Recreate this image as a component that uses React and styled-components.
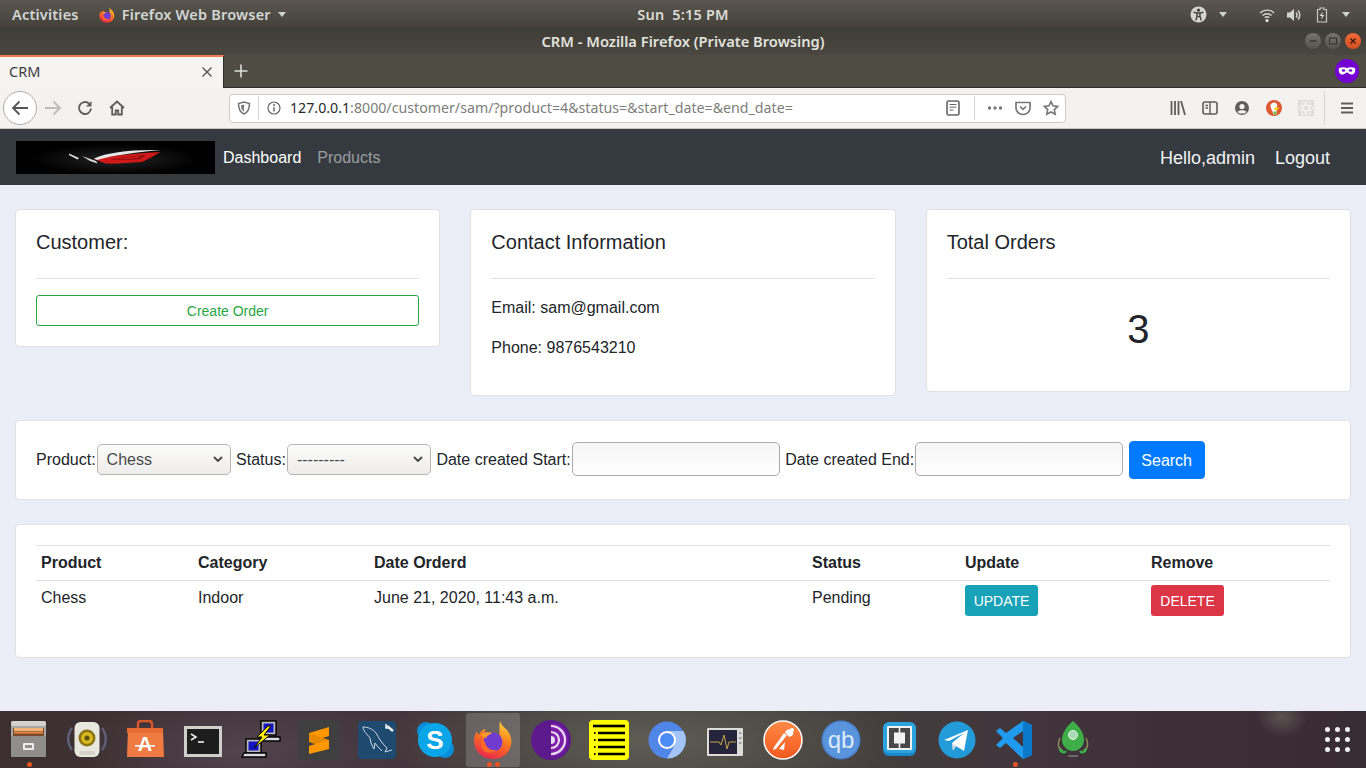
import styled, { createGlobalStyle } from "styled-components";

const GlobalStyle = createGlobalStyle`
  * { box-sizing: border-box; }
  html, body { margin: 0; padding: 0; height: 100%; overflow: hidden; }
  body { font-family: "Liberation Sans", Arial, sans-serif; font-size: 16px; line-height: 1.5; color: #212529; background: #ebeef6; }
`;

const Screen = styled.div`
  display: flex;
  flex-direction: column;
  height: 768px;
  width: 1366px;
  overflow: hidden;
`;

/* ---------- gnome top bar ---------- */
const TopBar = styled.div`
  height: 27px;
  display: grid;
  grid-template-columns: 1fr auto 1fr;
  align-items: center;
  padding-top: 2px;
  background: linear-gradient(#5b574f, #45423b);
  color: #dcdcd6;
  font-family: "Noto Sans", sans-serif;
  font-weight: 600;
  font-size: 14.5px;
  line-height: 25px;
  letter-spacing: 0.2px;
`;
const TopLeft = styled.div`
  display: flex;
  align-items: center;
  padding-left: 12px;
  color: #d3d7d4;
`;
const AppMenu = styled.div`
  display: flex;
  align-items: center;
  gap: 7px;
  margin-left: 20px;
`;
const Caret = styled.span`
  display: inline-block;
  width: 0;
  height: 0;
  border-left: 4.5px solid transparent;
  border-right: 4.5px solid transparent;
  border-top: 5px solid #d3d3ce;
`;
const TopRight = styled.div`
  display: flex;
  align-items: center;
  justify-content: flex-end;
  padding-right: 16px;
`;
const TrayGap = styled.span`
  display: inline-flex;
  margin-left: ${(p) => p.$left || 0}px;
`;

/* ---------- window title ---------- */
const TitleBar = styled.div`
  height: 28px;
  display: grid;
  grid-template-columns: 1fr auto 1fr;
  align-items: center;
  background: linear-gradient(#3e3c36, #4a4740);
  color: #e2e2dd;
  font-family: "Noto Sans", sans-serif;
  font-weight: 600;
  font-size: 14.7px;
`;
const WindowButtons = styled.div`
  grid-column: 3;
  display: flex;
  justify-content: flex-end;
  gap: 4px;
  padding-right: 5px;
`;
const WindowButton = styled.span`
  width: 16px;
  height: 16px;
  border-radius: 50%;
  display: flex;
  align-items: center;
  justify-content: center;
  background: ${(p) => (p.$close ? "linear-gradient(#f0693a,#d14f1f)" : "linear-gradient(#75736c,#55534c)")};
`;

const TabStrip = styled.div`
  height: 33px;
  display: flex;
  align-items: stretch;
  background: #4f4c44;
  border-bottom: 1px solid #2e2d29;
`;
const Tab = styled.div`
  width: 224px;
  height: 33px;
  display: flex;
  align-items: center;
  justify-content: space-between;
  padding: 0 10px 2px 9px;
  background: #f5f4f2;
  border-top: 2px solid #ee7d55;
  font-family: "Noto Sans", sans-serif;
  font-size: 14.5px;
  color: #3c3c3c;
  border-right: 1px solid #2e2d29;
`;
const NewTab = styled.div`
  width: 33px;
  display: flex;
  align-items: center;
  justify-content: center;
`;
const PrivateBadge = styled.div`
  margin-left: auto;
  margin-right: 7px;
  align-self: center;
  width: 24px;
  height: 24px;
  border-radius: 50%;
  background: #7400d3;
  display: flex;
  align-items: center;
  justify-content: center;
`;

const BrowserBar = styled.div`
  height: 41px;
  display: flex;
  align-items: center;
  padding-left: 3px;
  background: #f3f2f0;
  border-bottom: 1px solid #c8c7c4;
`;
const NavButtons = styled.div`
  width: 226px;
  display: flex;
  align-items: center;
`;
const BackButton = styled.div`
  width: 34px;
  height: 34px;
  border-radius: 50%;
  background: #fff;
  border: 1px solid #aeaeae;
  display: flex;
  align-items: center;
  justify-content: center;
`;
const NavSlot = styled.div`
  width: 32px;
  display: flex;
  justify-content: center;
`;
const UrlBar = styled.div`
  width: 837px;
  height: 29px;
  display: flex;
  align-items: center;
  background: #fff;
  border: 1px solid #cbcac7;
  border-radius: 4px;
  font-family: "Noto Sans", sans-serif;
  font-size: 14.2px;
  color: #7d7d7a;
`;
const UrlIcon = styled.span`
  display: inline-flex;
  justify-content: center;
  width: ${(p) => p.$w || 28}px;
`;
const UrlDivider = styled.span`
  width: 1px;
  height: 24px;
  background: #d4d3d1;
`;
const UrlText = styled.span`
  flex: 1;
  padding-left: 1px;
  white-space: nowrap;
  b { font-weight: 400; color: #2a2a2a; }
`;
const Tools = styled.div`
  display: flex;
  align-items: center;
  margin-left: 96px;
`;
const ToolDivider = styled.span`
  width: 1px;
  height: 34px;
  background: #d6d5d2;
  margin: 0 6px 0 2px;
`;

/* ---------- app navbar ---------- */
const Navbar = styled.nav`
  height: 56px;
  display: flex;
  align-items: center;
  padding: 0 36px 0 16px;
  background: #343a40;
`;
const Logo = styled.div`
  width: 199px;
  height: 33px;
  background: radial-gradient(ellipse at 50% 55%, #242424, #000 60%);
  display: flex;
  align-items: center;
  justify-content: center;
  margin-right: 8px;
`;
const NavLink = styled.a`
  padding-top: 2px;
  color: ${(p) => (p.$muted ? "rgba(255,255,255,.5)" : "#fff")};
  margin-right: 16px;
`;
const NavRight = styled.div`
  margin-left: auto;
  padding-top: 2px;
  display: flex;
  gap: 20px;
  color: #f1f3f5;
  font-size: 18px;
`;

/* ---------- page ---------- */
const Content = styled.main`
  flex: 1;
  display: flex;
  flex-direction: column;
  gap: 24px;
  padding: 24px 15px 0;
  background: #ebeef6;
`;
const CardRow = styled.div`
  display: grid;
  grid-template-columns: repeat(3, 1fr);
  gap: 30px;
  align-items: start;
`;
const Card = styled.section`
  background: #fff;
  border: 1px solid #dfe0e4;
  border-radius: 4px;
  padding: 20px;
`;
const CardTitle = styled.h5`
  margin: 0;
  font-size: 20px;
  font-weight: 500;
  line-height: 24px;
`;
const Rule = styled.hr`
  margin: 24px 0 16px;
  border: 0;
  border-top: 1px solid #e2e3e5;
`;
const OutlineButton = styled.a`
  display: block;
  text-align: center;
  height: 31px;
  line-height: 30px;
  font-size: 14px;
  color: #28a745;
  border: 1px solid #28a745;
  border-radius: 3px;
`;
const Info = styled.p`
  margin: 0 0 15px;
  padding-top: 1px;
`;
const Count = styled.h1`
  margin: 0 0 8px;
  padding: 10px 0;
  text-align: center;
  font-size: 40px;
  font-weight: 500;
  line-height: 48px;
`;
const FilterForm = styled.form`
  display: flex;
  align-items: center;
  gap: 5.5px;
  height: 38px;
`;
const Field = styled.label`
  display: flex;
  align-items: center;
  gap: 1px;
  margin-bottom: 2px;
`;
const FieldText = styled.span`
  padding-top: 2px;
`;
const SelectBox = styled.span`
  position: relative;
  display: inline-flex;
`;
const Select = styled.select`
  appearance: none;
  width: ${(p) => p.$w}px;
  height: 31px;
  padding: 0 0 0 9px;
  border: 1px solid #b5b5b3;
  border-radius: 5px;
  background: linear-gradient(#fbfbfa, #eeedec);
  font: 16px "Liberation Sans", sans-serif;
  color: #4a4a4a;
`;
const SelectArrow = styled.span`
  position: absolute;
  right: 7px;
  top: 9px;
  display: flex;
  pointer-events: none;
`;
const DateInput = styled.input`
  width: 208px;
  height: 34px;
  border: 1px solid #aaa;
  border-radius: 5px;
  background: linear-gradient(#f5f5f5, #fff);
`;
const SearchButton = styled.button`
  height: 38px;
  width: 76px;
  padding: 2px 0 0;
  border: 1px solid #007bff;
  border-radius: 4px;
  background: #007bff;
  color: #fff;
  font: 16px "Liberation Sans", sans-serif;
`;
const OrderTable = styled.table`
  width: 100%;
  table-layout: fixed;
  border-collapse: collapse;
  margin-bottom: 16px;
`;
const Th = styled.th`
  width: ${(p) => p.$w}px;
  text-align: left;
  padding: 5px;
  height: 35px;
  font-weight: 700;
  border-top: 1px solid #dee2e6;
  border-bottom: 1px solid #dee2e6;
`;
const Td = styled.td`
  padding: 5px 5px 3px;
  height: 40px;
  vertical-align: top;
`;
const ActionButton = styled.a`
  display: block;
  width: 73px;
  margin-top: -1px;
  height: 31px;
  line-height: 32px;
  text-align: center;
  font-size: 14px;
  color: #fff;
  border-radius: 3px;
  background: ${(p) => p.$bg};
`;

/* ---------- dock ---------- */
const Dock = styled.footer`
  height: 57px;
  display: flex;
  align-items: stretch;
  background:
    radial-gradient(ellipse 26px 20px at 1282px 6px, rgba(140,140,125,.4), transparent),
    radial-gradient(ellipse 260px 70px at 640px 30px, rgba(115,120,100,.55), transparent),
    radial-gradient(ellipse 160px 60px at 240px 40px, rgba(110,90,110,.4), transparent),
    linear-gradient(90deg, #3b2f30, #43363c 30%, #45403f 60%, #3e2e38 85%, #382c33);
`;
const DockSlot = styled.div`
  position: relative;
  width: 58px;
  display: flex;
  justify-content: center;
`;
const DockTile = styled.div`
  width: 54px;
  height: 54px;
  margin-top: 2px;
  padding-top: 7px;
  display: flex;
  justify-content: center;
  border-radius: 3px;
  background: ${(p) => (p.$active ? "rgba(255,255,255,.17)" : "transparent")};
`;
const RunningDots = styled.div`
  position: absolute;
  bottom: 1px;
  left: 0;
  right: 0;
  display: flex;
  justify-content: center;
  gap: 3px;
`;
const Dot = styled.span`
  width: 5px;
  height: 5px;
  border-radius: 50%;
  background: #e95420;
`;
const AppGrid = styled.div`
  margin-left: auto;
  margin-right: 16px;
  align-self: center;
  display: grid;
  grid-template-columns: repeat(3, 5px);
  gap: 5px;
  span {
    width: 5px;
    height: 5px;
    border-radius: 50%;
    background: #f2f2f2;
  }
`;

/* ---------- drawings ---------- */
const Svg = ({ s = 16, v, children }) => (
  <svg width={s} height={s} viewBox={v || `0 0 ${s} ${s}`} fill="none">
    {children}
  </svg>
);

const FirefoxLogo = ({ s = 40 }) => (
  <Svg s={s} v="0 0 40 40">
    <defs>
      <linearGradient id={`ff${s}`} x1="0.7" y1="0" x2="0.3" y2="1">
        <stop offset="0" stopColor="#ffd23a" />
        <stop offset="0.45" stopColor="#ff7a1c" />
        <stop offset="1" stopColor="#e8244f" />
      </linearGradient>
    </defs>
    <path
      d="M27 1c1 4 4 6 7 9 4 5 5 10 4 15-2 9-9 14-18 14C9 39 1 31 1 21c0-5 2-8 3-10 0 2 1 3 2 4 1-3 4-6 7-6-1 1-2 3-1 4 2-1 5-1 8 0 4 1 6 5 6 5 1-6 0-12 1-17z"
      fill={`url(#ff${s})`}
    />
    <circle cx="20" cy="22" r="9.5" fill="#6f3ccf" />
    <path d="M8 15c3-3 8-3 11-1-3 0-5 2-6 4-2 0-4-1-5-3z" fill="#ff9a2a" />
    <path d="M12 22c1 6 6 9 12 8-3 3-9 4-13 1-3-3-3-7-2-11z" fill="#ff6a2a" />
  </Svg>
);

const Files = () => (
  <Svg s={40}>
    <rect x="2" y="1" width="35" height="36" rx="3" fill="#a9a8a5" />
    <rect x="2" y="1" width="35" height="5" rx="2" fill="#d3d2ce" />
    <rect x="4" y="8" width="31" height="9" fill="#7a4a2c" />
    <rect x="5" y="8" width="29" height="3" fill="#f3b27a" />
    <rect x="5" y="11.5" width="29" height="2" fill="#e88a4c" />
    <rect x="2" y="16" width="35" height="21" rx="1" fill="#8f8e8b" />
    <rect x="14" y="23" width="11" height="7" rx="1" fill="#eee" />
    <rect x="16" y="25" width="7" height="3" fill="#8f8e8b" />
  </Svg>
);
const Speaker = () => (
  <Svg s={40}>
    <path d="M5 8a18 18 0 0 0 0 22M35 8a18 18 0 0 1 0 22" stroke="#5f5f78" strokeWidth="2.5" />
    <rect x="7.500" y="2" width="25" height="35" rx="6" fill="#e9e8df" />
    <circle cx="20" cy="18" r="8.500" fill="#8a7416" />
    <circle cx="20" cy="18" r="6" fill="#d8b81e" />
    <circle cx="20" cy="18" r="2.500" fill="#5e5010" />
    <rect x="12" y="31" width="16" height="4" rx="2" fill="#d2d1ca" />
  </Svg>
);
const AppStore = () => (
  <Svg s={40}>
    <path d="M13 8V4q0-3 3-3h8q3 0 3 3v4" stroke="#d9582a" strokeWidth="2.4" />
    <path d="M3 9h35l1 28H2z" fill="#ef7b42" />
    <rect x="2" y="8" width="36" height="5" fill="#e86a34" />
    <text x="20" y="31" fontFamily="Liberation Sans" fontWeight="700" fontSize="20" fill="#fff" textAnchor="middle">A</text>
    <rect x="10" y="25" width="20" height="1.6" fill="#fff" />
  </Svg>
);
const Terminal = () => (
  <Svg s={40}>
    <rect x="1" y="6" width="38" height="31" fill="#cfcfcb" />
    <rect x="4" y="9" width="32" height="25" fill="#1d1d1d" />
    <path d="M8 14l5 3-5 3" stroke="#eee" strokeWidth="1.6" />
    <path d="M15 22h6" stroke="#eee" strokeWidth="1.6" />
  </Svg>
);
const Putty = () => (
  <Svg s={40}>
    <rect x="20" y="1" width="15" height="14" fill="#bbb" stroke="#000" strokeWidth="1.4" />
    <rect x="22.5" y="3.5" width="10" height="9" fill="#1414c0" />
    <path d="M20 17h19v4H18z" fill="#ddd" stroke="#000" strokeWidth="1.4" />
    <rect x="5" y="19" width="15" height="14" fill="#bbb" stroke="#000" strokeWidth="1.4" />
    <rect x="7.5" y="21.5" width="10" height="9" fill="#1414c0" />
    <path d="M3 33h22v4H1z" fill="#ddd" stroke="#000" strokeWidth="1.4" />
    <path d="M27 6l-11 11 5 0-8 11 16-13-6 0 7-9z" fill="#ffee00" stroke="#000" strokeWidth="1" />
  </Svg>
);
const Sublime = () => (
  <Svg s={40}>
    <rect width="40" height="40" rx="3" fill="#3f3f3f" />
    <path d="M30 7v9L10 22v-9z" fill="#ff9800" />
    <path d="M10 13l20 7v9l-20-7z" fill="#e88a00" />
    <path d="M30 20v9L10 34v-8z" fill="#ff9800" />
  </Svg>
);
const Workbench = () => (
  <Svg s={40}>
    <rect x="1" y="1" width="38" height="38" rx="4" fill="#1f4a70" />
    <path
      d="M6 7c5 0 10 2 13 6 3 5 5 9 9 13l2 2-2 4 7-2M6 7c0 4 4 7 7 11l1 5 3 6 1-6c2 3 4 5 7 8"
      stroke="#c9d8e4"
      strokeWidth="1"
    />
    <path d="M30 6l6 5" stroke="#e8eef2" strokeWidth="2.6" />
    <path d="M29 4v4h3" stroke="#e8eef2" strokeWidth="1.6" />
  </Svg>
);
const Skype = () => (
  <Svg s={40}>
    <circle cx="11" cy="11" r="9" fill="#0b8ed8" />
    <circle cx="30" cy="29" r="9" fill="#0b8ed8" />
    <circle cx="20" cy="20" r="17" fill="#0aa6e8" />
    <text x="20" y="29" fontFamily="Liberation Sans" fontWeight="700" fontSize="26" fill="#fff" textAnchor="middle">S</text>
  </Svg>
);
const Tor = () => (
  <Svg s={40}>
    <circle cx="20" cy="20" r="20" fill="#5c1a8c" />
    <path d="M20 3a17 17 0 0 1 0 34z" fill="#7d1fa8" />
    <path d="M20 6a14 14 0 0 1 0 28M20 12a8 8 0 0 1 0 16" stroke="#eadcf5" strokeWidth="2.2" />
    <path d="M20 16a4 4 0 0 1 0 8z" fill="#eadcf5" />
  </Svg>
);
const Notes = () => (
  <Svg s={40}>
    <rect width="40" height="40" rx="4" fill="#ffff00" />
    <path d="M4 6h32" stroke="#000" strokeWidth="2.6" />
    <path d="M9 13h27M9 20h27M9 27h27M9 34h27" stroke="#000" strokeWidth="2.6" />
    <path d="M5 13h1.5M5 20h1.5M5 27h1.5M5 34h1.5" stroke="#000" strokeWidth="2" />
  </Svg>
);
const Chromium = () => (
  <Svg s={40}>
    <circle cx="20" cy="20" r="18.5" fill="#4f86e8" />
    <path d="M20 11h16.5A18.5 18.5 0 0 1 20 38.5l7-12z" fill="#a4c4f7" />
    <circle cx="20" cy="20" r="9" fill="#fff" />
    <circle cx="20" cy="20" r="7" fill="#4c8bf5" />
  </Svg>
);
const Monitor = () => (
  <Svg s={40}>
    <rect x="2" y="8" width="36" height="28" rx="1" fill="#dcdcd8" />
    <rect x="4" y="10" width="28" height="24" fill="#26243a" />
    <path d="M5 22h9l2 3 3-10 3 14 2-7h7" stroke="#c2a84a" strokeWidth="1" />
    <path d="M34 13h2.500M34 18h2.500M34 23h2.500" stroke="#888" strokeWidth="1.4" />
  </Svg>
);
const Postman = () => (
  <Svg s={40}>
    <defs>
      <linearGradient id="pm" x1="0" y1="0" x2="0" y2="1">
        <stop offset="0" stopColor="#ff8a45" />
        <stop offset="1" stopColor="#f4581f" />
      </linearGradient>
    </defs>
    <circle cx="20" cy="20" r="19" fill="url(#pm)" stroke="#fff" strokeWidth="1.5" />
    <path d="M10 30l3-1 11-14-3-2-10 14zM22 12c3-4 7-3 8 0s-1 4-4 5z" fill="#fff" />
    <path d="M16 29l5 1 1-8z" fill="#fff" />
    <circle cx="29" cy="10" r="2" fill="#fff" />
  </Svg>
);
const Qbit = () => (
  <Svg s={40}>
    <circle cx="20" cy="20" r="19.5" fill="#4a80cc" />
    <circle cx="20" cy="20" r="18" fill="#5a94dc" />
    <text x="20" y="28" fontFamily="Liberation Sans" fontSize="24" fill="#dcebff" textAnchor="middle">qb</text>
  </Svg>
);
const Vmware = () => (
  <Svg s={40}>
    <rect x="4" y="3" width="33" height="33" rx="6" fill="#1b86c8" />
    <rect x="4" y="2" width="33" height="31" rx="6" fill="#2aa3df" />
    <rect x="8" y="6" width="25" height="24" rx="1" fill="#f2f2f2" />
    <rect x="10" y="8" width="9.700" height="20" fill="#474747" />
    <rect x="21.300" y="8" width="9.700" height="20" fill="#474747" />
    <rect x="15" y="12.500" width="11" height="11" fill="#f2f2f2" />
  </Svg>
);
const Telegram = () => (
  <Svg s={40}>
    <circle cx="20" cy="20" r="18.5" fill="#239bd8" />
    <path d="M7 20l24-10-4 21-8-5-3 4-1-7 12-10-15 8z" fill="#fff" />
    <path d="M15 23l1 8 3-5z" fill="#cfd8e0" />
  </Svg>
);
const VsCode = () => (
  <Svg s={40}>
    <path d="M28 1l9 4v30l-9 4-17-16-6 5-4-3 7-7-7-7 4-3 6 5zM28 11l-10 7 10 9z" fill="#1f9cf0" />
    <path d="M28 1l9 4v30l-9 4z" fill="#0b78c8" />
  </Svg>
);
const Rocket = () => (
  <Svg s={40}>
    <path d="M20 1c6 5 11 12 11 19 0 6-5 11-11 11S9 26 9 20C9 13 14 6 20 1z" fill="#3fae49" />
    <path d="M7 18c-3 6-2 11 3 13M33 18c3 6 2 11-3 13" stroke="#8a8a5a" strokeWidth="1.5" />
    <path d="M7 29c1 4 5 4 6 2M33 29c-1 4-5 4-6 2" stroke="#2eb84a" strokeWidth="2.2" />
    <circle cx="20" cy="15" r="4.5" fill="#a8dcb4" stroke="#e0f5e4" />
    <path d="M15 36h10" stroke="#8a8a8a" strokeWidth="1.2" />
  </Svg>
);

const dockApps = [
  { icon: Files, dots: 1 },
  { icon: Speaker },
  { icon: AppStore },
  { icon: Terminal },
  { icon: Putty },
  { icon: Sublime },
  { icon: Workbench },
  { icon: Skype },
  { icon: FirefoxLogo, dots: 2, active: true },
  { icon: Tor },
  { icon: Notes },
  { icon: Chromium },
  { icon: Monitor },
  { icon: Postman },
  { icon: Qbit },
  { icon: Vmware },
  { icon: Telegram },
  { icon: VsCode, dots: 1 },
  { icon: Rocket },
];

const grey = "#5f5e5a";

const App = () => {
  return (
    <Screen>
      <GlobalStyle />
      <TopBar>
        <TopLeft>
          Activities
          <AppMenu>
            <FirefoxLogo s={16} />
            Firefox Web Browser
            <Caret />
          </AppMenu>
        </TopLeft>
        <div>Sun&nbsp; 5:15 PM</div>
        <TopRight>
          <Svg s={17}>
            <circle cx="8.5" cy="8.5" r="8" fill="#d6d6d0" />
            <circle cx="8.5" cy="4.2" r="1.6" fill="#45423b" />
            <path d="M3.5 6.3l3.6.7v3l-1.3 4.5M13.5 6.3l-3.6.7v3l1.3 4.5M7 7h3v3.6H7z" stroke="#45423b" strokeWidth="1.4" />
          </Svg>
          <TrayGap $left={12}><Caret /></TrayGap>
          <TrayGap $left={32}>
            <Svg s={16}>
              <path d="M1 6a10 10 0 0 1 14 0M3.5 8.5a6.5 6.5 0 0 1 9 0M5.7 10.8a3.4 3.4 0 0 1 4.6 0" stroke="#d6d6d0" strokeWidth="1.4" />
              <circle cx="8" cy="13.5" r="1.6" fill="#e6e6e0" />
            </Svg>
          </TrayGap>
          <TrayGap $left={11}>
            <Svg s={16}>
              <path d="M1 5.5h3L8 2v12l-4-3.5H1z" fill="#d6d6d0" />
              <path d="M10 5.5a3.5 3.5 0 0 1 0 5M12 3.5a6.5 6.5 0 0 1 0 9" stroke="#d6d6d0" strokeWidth="1.5" />
            </Svg>
          </TrayGap>
          <TrayGap $left={12}>
            <Svg s={16}>
              <path d="M6 1h4v1.5h2.5V15h-9V2.5H6z" stroke="#c8c8c2" strokeWidth="1.2" />
              <path d="M9 4.5L5.5 9H8l-1 3.5L10.5 8H8z" fill="#d6d6d0" />
            </Svg>
          </TrayGap>
          <TrayGap $left={12}><Caret /></TrayGap>
        </TopRight>
      </TopBar>

      <TitleBar>
        <span />
        <div>CRM - Mozilla Firefox (Private Browsing)</div>
        <WindowButtons>
          <WindowButton>
            <Svg s={10}><path d="M1.5 5h7" stroke="#2f2e2a" strokeWidth="1.2" /></Svg>
          </WindowButton>
          <WindowButton>
            <Svg s={10}><rect x="1.5" y="2" width="7" height="6" stroke="#2f2e2a" strokeWidth="1" /></Svg>
          </WindowButton>
          <WindowButton $close>
            <Svg s={10}><path d="M2.5 2.5l5 5M7.5 2.5l-5 5" stroke="#3a1a0c" strokeWidth="1.3" /></Svg>
          </WindowButton>
        </WindowButtons>
      </TitleBar>

      <TabStrip>
        <Tab>
          CRM
          <Svg s={12}><path d="M1.5 1.5l9 9M10.5 1.5l-9 9" stroke="#555" strokeWidth="1.4" /></Svg>
        </Tab>
        <NewTab>
          <Svg s={14}><path d="M7 0.5v13M0.5 7h13" stroke="#ddd" strokeWidth="1.6" /></Svg>
        </NewTab>
        <PrivateBadge>
          <Svg s={18}>
            <path d="M1 6c3-1 5-1 8 0 3-1 5-1 8 0 1 4-1 7-4 6.5-2-.3-2.500-2-4-2s-2 1.700-4 2C2 13 0 10 1 6z" fill="#fff" />
            <ellipse cx="5.500" cy="8.500" rx="1.700" ry="1.200" fill="#7400d3" />
            <ellipse cx="12.500" cy="8.500" rx="1.700" ry="1.200" fill="#7400d3" />
          </Svg>
        </PrivateBadge>
      </TabStrip>

      <BrowserBar>
        <NavButtons>
          <BackButton>
            <Svg s={18}><path d="M17 9H2M8.500 2.500L2 9l6.500 6.500" stroke="#555" strokeWidth="1.800" /></Svg>
          </BackButton>
          <NavSlot>
            <Svg s={18}><path d="M1 9h15M9.500 2.500L16 9l-6.500 6.500" stroke="#bcbcba" strokeWidth="1.800" /></Svg>
          </NavSlot>
          <NavSlot>
            <Svg s={16}>
              <path d="M14 8.500A6 6 0 1 1 12 3.500" stroke="#5c5c5a" strokeWidth="1.900" />
              <path d="M14.500 1v5.500H9z" fill="#5c5c5a" />
            </Svg>
          </NavSlot>
          <NavSlot>
            <Svg s={16}>
              <path d="M1 8l7-6.500L15 8M3.200 7v7.500h3.600v-4h2.400v4h3.600V7" stroke="#5c5c5a" strokeWidth="1.800" />
            </Svg>
          </NavSlot>
        </NavButtons>
        <UrlBar>
          <UrlIcon>
            <Svg s={14}>
              <path d="M7 1l5.500 1.500c0 5-1 8.500-5.500 10.500C2.500 11 1.500 7.500 1.500 2.500z" stroke="#777" strokeWidth="1.600" />
              <path d="M7 3.500v7C4.800 9.300 4 7.500 4 4.300z" fill="#777" />
            </Svg>
          </UrlIcon>
          <UrlDivider />
          <UrlIcon $w={30}>
            <Svg s={14}>
              <circle cx="7" cy="7" r="6" stroke="#666" strokeWidth="1.200" />
              <path d="M7 6.200V10.500" stroke="#666" strokeWidth="1.500" />
              <circle cx="7" cy="4" r="1" fill="#666" />
            </Svg>
          </UrlIcon>
          <UrlText>
            <b>127.0.0.1</b>:8000/customer/sam/?product=4&amp;status=&amp;start_date=&amp;end_date=
          </UrlText>
          <UrlIcon $w={24}>
            <Svg s={16}>
              <rect x="2" y="1" width="12" height="14" rx="1.500" stroke="#666" strokeWidth="1.600" />
              <path d="M4.500 4.500h7M4.500 7.200h7M4.500 10h4" stroke="#666" />
            </Svg>
          </UrlIcon>
          <UrlIcon $w={9} />
          <UrlDivider />
          <UrlIcon $w={6} />
          <UrlIcon>
            <Svg s={18}>
              <circle cx="3.500" cy="9" r="1.700" fill="#777" />
              <circle cx="9" cy="9" r="1.700" fill="#777" />
              <circle cx="14.500" cy="9" r="1.700" fill="#777" />
            </Svg>
          </UrlIcon>
          <UrlIcon>
            <Svg s={16}>
              <path d="M1 2.500h14V8a7 6.500 0 0 1-14 0z" stroke="#777" strokeWidth="1.700" />
              <path d="M5 6.500L8 9.300l3-2.800" stroke="#777" strokeWidth="1.700" />
            </Svg>
          </UrlIcon>
          <UrlIcon>
            <Svg s={16}>
              <path d="M8 1.500l2 4.300 4.700.6-3.400 3.200.9 4.700L8 12l-4.200 2.300.9-4.700L1.300 6.400 6 5.800z" stroke="#777" strokeWidth="1.600" />
            </Svg>
          </UrlIcon>
        </UrlBar>
        <Tools>
          <NavSlot>
            <Svg s={16}>
              <path d="M1.500 1v14M5 1v14M8.500 1v14" stroke={grey} strokeWidth="1.800" />
              <path d="M11 1l4 14" stroke={grey} strokeWidth="1.800" />
            </Svg>
          </NavSlot>
          <NavSlot>
            <Svg s={16}>
              <rect x="1" y="2" width="14" height="12" rx="2" stroke={grey} strokeWidth="1.600" />
              <path d="M8 2v12M3.500 5.500h2.500M3.500 8h2.500" stroke={grey} strokeWidth="1.400" />
            </Svg>
          </NavSlot>
          <NavSlot>
            <Svg s={16}>
              <circle cx="8" cy="8" r="7" fill={grey} />
              <circle cx="8" cy="6.500" r="2.600" fill="#f3f2f0" />
              <path d="M3.500 12c1-2.500 8-2.500 9 0-2 2-7 2-9 0z" fill="#f3f2f0" />
            </Svg>
          </NavSlot>
          <NavSlot>
            <Svg s={16}>
              <circle cx="8" cy="8" r="8" fill="#de5833" />
              <path d="M4.500 5c1-3 5-3.500 6.500-1 .8 2-.5 3.500-.5 5.500s1 4-.5 5H7C7.500 11 4 9 4.500 5z" fill="#fff" />
              <path d="M8.500 7.500h5l-2 2.500H8.500z" fill="#fdd20a" />
              <path d="M7.500 11.500h3.500l-1 3H7.500z" fill="#65bc46" />
            </Svg>
          </NavSlot>
          <NavSlot>
            <Svg s={16}>
              <rect width="16" height="16" fill="#dedddb" />
              <g stroke="#f6f6f5">
                <ellipse cx="8" cy="8" rx="7" ry="2.800" />
                <ellipse cx="8" cy="8" rx="7" ry="2.800" transform="rotate(60 8 8)" />
                <ellipse cx="8" cy="8" rx="7" ry="2.800" transform="rotate(120 8 8)" />
              </g>
            </Svg>
          </NavSlot>
          <ToolDivider />
          <NavSlot>
            <Svg s={14}>
              <path d="M1 2.500h12M1 7h12M1 11.500h12" stroke={grey} strokeWidth="2" />
            </Svg>
          </NavSlot>
        </Tools>
      </BrowserBar>

      <Navbar>
        <Logo>
          <svg width="100" height="16" viewBox="0 0 100 16">
            <path d="M28 10C50 6 72 4 94.500 3L84 9l-8 4c-14 1-26 2-36.500 1.500z" fill="#d01818" />
            <path d="M44 11c14-3 26-4 36-5l-6 4c-10 1-20 1-30 1z" fill="#7a1010" />
            <path d="M48 10.500c10-2 20-3 27-3.500l-3 2c-8 1-16 1.500-24 1.500z" fill="#d01818" />
            <path d="M3 4.500l10 4.500-1.500 1.500L3 6z" fill="#e0e0e0" />
            <path d="M16 7l14 5 1.500 2.500-7.500-2.500z" fill="#d8d8d8" />
            <path d="M28 9.500C42 3.500 62 .5 95 1 72 3 48 6 31 11z" fill="#e8e8e8" />
          </svg>
        </Logo>
        <NavLink>Dashboard</NavLink>
        <NavLink $muted>Products</NavLink>
        <NavRight>
          <span>Hello,admin</span>
          <span>Logout</span>
        </NavRight>
      </Navbar>

      <Content>
        <CardRow>
          <Card>
            <CardTitle>Customer:</CardTitle>
            <Rule />
            <OutlineButton>Create Order</OutlineButton>
          </Card>
          <Card>
            <CardTitle>Contact Information</CardTitle>
            <Rule />
            <Info>Email: sam@gmail.com</Info>
            <Info>Phone: 9876543210</Info>
          </Card>
          <Card>
            <CardTitle>Total Orders</CardTitle>
            <Rule />
            <Count>3</Count>
          </Card>
        </CardRow>

        <Card>
          <FilterForm>
            <Field>
              <FieldText>Product:</FieldText>
              <SelectBox>
                <Select $w={134} defaultValue="4">
                  <option value="4">Chess</option>
                </Select>
                <SelectArrow>
                  <Svg s={12}><path d="M2 4l4 4 4-4" stroke="#444" strokeWidth="1.800" /></Svg>
                </SelectArrow>
              </SelectBox>
            </Field>
            <Field>
              <FieldText>Status:</FieldText>
              <SelectBox>
                <Select $w={144} defaultValue="">
                  <option value="">---------</option>
                </Select>
                <SelectArrow>
                  <Svg s={12}><path d="M2 4l4 4 4-4" stroke="#444" strokeWidth="1.800" /></Svg>
                </SelectArrow>
              </SelectBox>
            </Field>
            <Field>
              <FieldText>Date created Start:</FieldText>
              <DateInput />
            </Field>
            <Field>
              <FieldText>Date created End:</FieldText>
              <DateInput />
            </Field>
            <SearchButton type="button">Search</SearchButton>
          </FilterForm>
        </Card>

        <Card>
          <OrderTable>
            <thead>
              <tr>
                <Th $w={157}>Product</Th>
                <Th $w={176}>Category</Th>
                <Th $w={438}>Date Orderd</Th>
                <Th $w={153}>Status</Th>
                <Th $w={186}>Update</Th>
                <Th $w={184}>Remove</Th>
              </tr>
            </thead>
            <tbody>
              <tr>
                <Td>Chess</Td>
                <Td>Indoor</Td>
                <Td>June 21, 2020, 11:43 a.m.</Td>
                <Td>Pending</Td>
                <Td><ActionButton $bg="#17a2b8">UPDATE</ActionButton></Td>
                <Td><ActionButton $bg="#dc3545">DELETE</ActionButton></Td>
              </tr>
            </tbody>
          </OrderTable>
        </Card>
      </Content>

      <Dock>
        {dockApps.map(({ icon: Icon, dots, active }, i) => (
          <DockSlot key={i}>
            <DockTile $active={active}>
              <Icon />
            </DockTile>
            {dots && (
              <RunningDots>
                {Array.from({ length: dots }).map((_, d) => (
                  <Dot key={d} />
                ))}
              </RunningDots>
            )}
          </DockSlot>
        ))}
        <AppGrid>
          {Array.from({ length: 9 }).map((_, i) => (
            <span key={i} />
          ))}
        </AppGrid>
      </Dock>
    </Screen>
  );
};

export default App;
